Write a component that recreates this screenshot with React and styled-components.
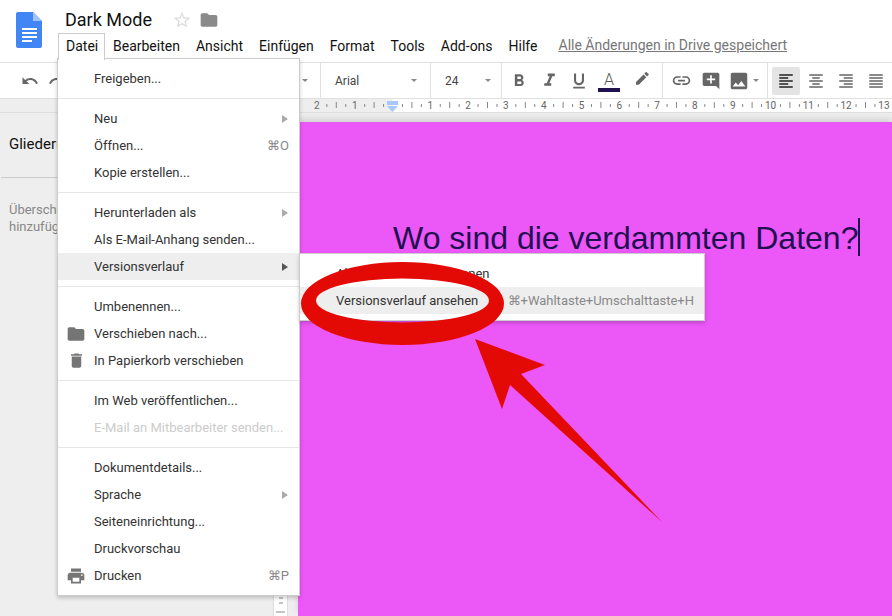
import styled, { createGlobalStyle } from 'styled-components';

const GlobalStyle = createGlobalStyle`
	html, body {
		margin: 0;
		padding: 0;
		overflow: hidden;
		background: #fff;
		font-family: Roboto, "Liberation Sans", sans-serif;
	}
`;

const paths = {
	undo: 'M12.5 8c-2.65 0-5.05.99-6.9 2.6L2 7v9h9l-3.62-3.62c1.39-1.16 3.16-1.88 5.12-1.88 3.54 0 6.55 2.31 7.6 5.5l2.37-.78C21.08 11.03 17.15 8 12.5 8z',
	redo: 'M18.4 10.6C16.55 8.99 14.15 8 11.5 8c-4.65 0-8.58 3.03-9.96 7.22L3.9 16c1.05-3.19 4.05-5.5 7.6-5.5 1.95 0 3.73.72 5.12 1.88L13 16h9V7l-3.6 3.6z',
	bold: 'M15.6 10.79c.97-.67 1.65-1.77 1.65-2.79 0-2.26-1.75-4-4-4H7v14h7.04c2.09 0 3.71-1.7 3.71-3.79 0-1.52-.86-2.82-2.15-3.42zM10 6.5h3c.83 0 1.5.67 1.5 1.5s-.67 1.5-1.5 1.5h-3v-3zm3.5 9H10v-3h3.5c.83 0 1.5.67 1.5 1.5s-.67 1.5-1.5 1.5z',
	italic: 'M10 4v3h2.21l-3.42 8H6v3h8v-3h-2.21l3.42-8H18V4z',
	underline: 'M12 17c3.31 0 6-2.69 6-6V3h-2.5v8c0 1.93-1.57 3.5-3.5 3.5S8.5 12.93 8.5 11V3H6v8c0 3.31 2.69 6 6 6zm-7 2v2h14v-2H5z',
	pen: 'M17.75 7 14 3.25l-10 10V17h3.75l10-10zm2.96-2.96c.39-.39.39-1.02 0-1.41L18.37.29c-.39-.39-1.02-.39-1.41 0L15 2.25 18.75 6l1.96-1.96z',
	link: 'M3.9 12c0-1.71 1.39-3.1 3.1-3.1h4V7H7c-2.76 0-5 2.24-5 5s2.24 5 5 5h4v-1.9H7c-1.71 0-3.1-1.39-3.1-3.1zM8 13h8v-2H8v2zm9-6h-4v1.9h4c1.71 0 3.1 1.39 3.1 3.1s-1.39 3.1-3.1 3.1h-4V17h4c2.76 0 5-2.24 5-5s-2.24-5-5-5z',
	comment: 'M21.99 4c0-1.1-.89-2-1.99-2H4c-1.1 0-2 .9-2 2v12c0 1.1.9 2 2 2h14l4 4-.01-18zM17 11h-4v4h-2v-4H7V9h4V5h2v4h4v2z',
	image: 'M21 19V5c0-1.1-.9-2-2-2H5c-1.1 0-2 .9-2 2v14c0 1.1.9 2 2 2h14c1.1 0 2-.9 2-2zM8.5 13.5l2.5 3.01L14.5 12l4.5 6H5l3.5-4.5z',
	alignLeft: 'M15 15H3v2h12v-2zm0-8H3v2h12V7zM3 13h18v-2H3v2zm0 8h18v-2H3v2zM3 3v2h18V3H3z',
	alignCenter: 'M7 15v2h10v-2H7zm-4 6h18v-2H3v2zm0-8h18v-2H3v2zm4-6v2h10V7H7zM3 3v2h18V3H3z',
	alignRight: 'M3 21h18v-2H3v2zm6-4h12v-2H9v2zm-6-4h18v-2H3v2zm6-4h12V7H9v2zM3 3v2h18V3H3z',
	alignJustify: 'M3 21h18v-2H3v2zm0-4h18v-2H3v2zm0-4h18v-2H3v2zm0-4h18V7H3v2zm0-6v2h18V3H3z',
	folder: 'M10 4H4c-1.1 0-1.99.9-1.99 2L2 18c0 1.1.9 2 2 2h16c1.1 0 2-.9 2-2V8c0-1.1-.9-2-2-2h-8l-2-2z',
	trash: 'M6 19c0 1.1.9 2 2 2h8c1.1 0 2-.9 2-2V7H6v12zM19 4h-3.5l-1-1h-5l-1 1H5v2h14V4z',
	print: 'M19 8H5c-1.66 0-3 1.34-3 3v6h4v4h12v-4h4v-6c0-1.66-1.34-3-3-3zm-3 11H8v-5h8v5zm3-7c-.55 0-1-.45-1-1s.45-1 1-1 1 .45 1 1-.45 1-1 1zm-1-9H6v4h12V3z',
	star: 'M22 9.24l-7.19-.62L12 2 9.19 8.63 2 9.24l5.46 4.73L5.82 21 12 17.27 18.18 21l-1.63-7.03L22 9.24zM12 15.4l-3.76 2.27 1-4.28-3.32-2.88 4.38-.38L12 6.1l1.71 4.04 4.38.38-3.32 2.88 1 4.28L12 15.4z',
};

const Icon = ({ name, size = 18, color = '#666' }) => (
	<svg width={size} height={size} viewBox="0 0 24 24" fill={color} style={{ display: 'block', flex: 'none' }}>
		<path d={paths[name]} />
	</svg>
);

const Page = styled.div`
	position: relative;
	width: 892px;
	height: 616px;
	overflow: hidden;
	display: flex;
	flex-direction: column;
	background: #fff;
`;

const Header = styled.header`
	height: 62px;
	flex: none;
	display: flex;
	border-bottom: 1px solid #e0e0e0;
`;

const Logo = styled.svg`
	flex: none;
	width: 26px;
	height: 36px;
	margin: 12px 16px 0 16px;
`;

const HeaderMain = styled.div`
	display: flex;
	flex-direction: column;
`;

const TitleRow = styled.div`
	height: 33px;
	padding: 8px 0 0 7px;
	box-sizing: border-box;
	display: flex;
	align-items: flex-start;
`;

const DocTitle = styled.div`
	font-size: 18px;
	line-height: 24px;
	color: #111;
	margin-right: 20px;
	width: 87px;
	white-space: nowrap;
`;

const TitleIcon = styled.div`
	margin: 2px ${(props) => props.gap || 0}px 0 0;
`;

const MenuBar = styled.nav`
	display: flex;
	align-items: flex-start;
	font-size: 14px;
	color: #111;
`;

const MenuTab = styled.div`
	position: relative;
	height: 26px;
	line-height: 24px;
	padding: 0 7px;
	box-sizing: border-box;
	border: 1px solid transparent;
	border-bottom: none;
	white-space: nowrap;

	${(props) =>
		props.open &&
		`
		width: 47px;
		height: 27px;
		border-color: #ccc;
		background: #fff;
		z-index: 3;
	`}
`;

const SaveStatus = styled.div`
	margin-left: 13px;
	line-height: 24px;
	color: #777;
	text-decoration: underline;
	white-space: nowrap;
`;

const Toolbar = styled.div`
	height: 35px;
	flex: none;
	display: flex;
	border-bottom: 1px solid #e0e0e0;
`;

const ToolGroup = styled.div`
	width: ${(props) => props.width}px;
	flex: none;
	display: flex;
	align-items: center;
	padding-left: ${(props) => props.pad || 0}px;
	box-sizing: border-box;
	gap: ${(props) => props.gap || 0}px;
	font-size: 13px;
	color: #555;

	& + & {
		border-left: 1px solid #e0e0e0;
	}
`;

const ToolButton = styled.div`
	width: ${(props) => props.width || 30}px;
	height: 28px;
	flex: none;
	display: flex;
	align-items: center;
	justify-content: center;
	background: ${(props) => (props.active ? '#e4e4e4' : 'transparent')};
	border-radius: 2px;
`;

const DropArrow = styled.span`
	flex: none;
	width: 0;
	height: 0;
	margin-left: ${(props) => props.left || 0}px;
	border-left: 3px solid transparent;
	border-right: 3px solid transparent;
	border-top: 3px solid #888;
`;

const ToolLabel = styled.span`
	width: ${(props) => props.width}px;
	flex: none;
	font-size: ${(props) => props.size || 12}px;
	color: #444;
`;

const TextColor = styled.div`
	width: 22px;
	display: flex;
	flex-direction: column;
	align-items: center;
	margin-top: 2px;
`;

const TextColorLetter = styled.span`
	font-size: 16px;
	font-weight: 300;
	line-height: 17px;
	color: #555;
`;

const TextColorBar = styled.span`
	width: 22px;
	height: 4px;
	background: #1f1050;
`;

const RulerBar = styled.div`
	height: 13px;
	flex: none;
	background: #eee;
	border-bottom: 1px solid #ddd;
`;

const RulerText = styled.text`
	font-family: Roboto, "Liberation Sans", sans-serif;
	font-size: 10px;
	fill: #666;
	text-anchor: middle;
`;

const Workspace = styled.main`
	flex: 1;
	min-height: 0;
	display: flex;
	background: #eee;
`;

const Sidebar = styled.aside`
	width: 273px;
	flex: none;
	box-sizing: border-box;
	overflow: hidden;
`;

const SidebarTitle = styled.div`
	height: 65px;
	margin-left: 1px;
	padding: 21px 0 0 8px;
	box-sizing: border-box;
	font-size: 15px;
	line-height: 20px;
	color: #111;
	border-bottom: 1px solid #ccc;
`;

const SidebarHint = styled.p`
	margin: 23px 0 0 9px;
	font-size: 13px;
	line-height: 17px;
	color: #888;
	white-space: nowrap;
`;

const VerticalRuler = styled.div`
	width: 13px;
	flex: none;
	margin-top: 9px;
	background: #fff;
	border-left: 1px solid #ddd;
	border-right: 1px solid #ddd;
	display: flex;
	flex-direction: column;
	justify-content: flex-end;
`;

const DocCanvas = styled.div`
	flex: 1;
	margin: 9px 0 0 10px;
	padding: 96px 0 0 95px;
	background: #ec57f7;
	box-shadow: 0 -3px 6px rgba(0, 0, 0, 0.12);
`;

const DocLine = styled.div`
	display: inline-block;
	padding-top: 2px;
	font-family: "Liberation Sans", Arial, sans-serif;
	font-size: 32px;
	line-height: 36px;
	color: #1f1050;
	border-right: 2px solid #1f1050;
	white-space: nowrap;
`;

const Menu = styled.div`
	position: absolute;
	z-index: 2;
	top: ${(props) => props.top}px;
	left: ${(props) => props.left}px;
	width: ${(props) => props.width}px;
	padding: 6px 0;
	box-sizing: border-box;
	background: #fff;
	border: 1px solid #ccc;
	box-shadow: 0 2px 4px rgba(0, 0, 0, 0.2);
	font-size: 13px;
`;

const MenuRow = styled.div`
	position: relative;
	height: 27px;
	display: flex;
	align-items: center;
	justify-content: space-between;
	padding: 0 10px 0 36px;
	background: ${(props) => (props.active ? '#eee' : 'transparent')};
	color: ${(props) => (props.disabled ? '#ccc' : '#333')};
	white-space: nowrap;
`;

const MenuIcon = styled.span`
	position: absolute;
	left: 0;
	top: 0;
	width: 36px;
	height: 27px;
	display: flex;
	align-items: center;
	justify-content: center;
`;

const Shortcut = styled.span`
	color: #888;
`;

const SubArrow = styled.span`
	width: 0;
	height: 0;
	margin-right: 1px;
	border-top: 4px solid transparent;
	border-bottom: 4px solid transparent;
	border-left: 6px solid ${(props) => (props.dark ? '#555' : '#aaa')};
`;

const Separator = styled.div`
	height: 1px;
	margin: 6px 0;
	background: #e6e6e6;
`;

const Annotation = styled.svg`
	position: absolute;
	z-index: 4;
	top: 0;
	left: 0;
	pointer-events: none;
`;

const menuSections = [
	[{ label: 'Freigeben...' }],
	[
		{ label: 'Neu', sub: true },
		{ label: 'Öffnen...', shortcut: '⌘O' },
		{ label: 'Kopie erstellen...' },
	],
	[
		{ label: 'Herunterladen als', sub: true },
		{ label: 'Als E-Mail-Anhang senden...' },
		{ label: 'Versionsverlauf', sub: true, active: true },
	],
	[
		{ label: 'Umbenennen...' },
		{ label: 'Verschieben nach...', icon: 'folder', iconSize: 20 },
		{ label: 'In Papierkorb verschieben', icon: 'trash', iconSize: 19 },
	],
	[
		{ label: 'Im Web veröffentlichen...' },
		{ label: 'E-Mail an Mitbearbeiter senden...', disabled: true },
	],
	[
		{ label: 'Dokumentdetails...' },
		{ label: 'Sprache', sub: true },
		{ label: 'Seiteneinrichtung...' },
		{ label: 'Druckvorschau' },
		{ label: 'Drucken', icon: 'print', iconSize: 20, shortcut: '⌘P' },
	],
];

const menuTabs = ['Bearbeiten', 'Ansicht', 'Einfügen', 'Format', 'Tools', 'Add-ons', 'Hilfe'];

const RULER_ORIGIN = 392.5;
const RULER_INCH = 37.8;

const Ruler = () => {
	const marks = [];
	for (let q = -8; q < 53; q++) {
		const x = RULER_ORIGIN + (q * RULER_INCH) / 4;
		if (q === 0) continue;
		if (q % 4 === 0) {
			marks.push(
				<RulerText key={q} x={x} y={10}>
					{Math.abs(q / 4)}
				</RulerText>
			);
		} else if (q % 2 === 0) {
			marks.push(<rect key={q} x={x} y={3} width={1} height={6} fill="#888" />);
		} else {
			marks.push(<rect key={q} x={x} y={5} width={1} height={3} fill="#888" />);
		}
	}
	return (
		<RulerBar>
			<svg width="892" height="13" style={{ display: 'block' }}>
				<rect x={RULER_ORIGIN} y="0" width="500" height="13" fill="#fff" />
				{marks}
				<rect x="387" y="2" width="11" height="4" fill="#a8c7fa" />
				<path d="M387 7h11l-5.500 6z" fill="#a8c7fa" />
			</svg>
		</RulerBar>
	);
};

const App = () => {
	return (
		<Page>
			<GlobalStyle />
			<Header>
				<Logo viewBox="0 0 26 36">
					<path d="M2 0h15l9 9v25a2 2 0 0 1-2 2H2a2 2 0 0 1-2-2V2a2 2 0 0 1 2-2z" fill="#4285f4" />
					<path d="M17 0l9 9h-9z" fill="#a1c2fa" />
					<path d="M6 16h15v2H6zM6 20h15v2H6zM6 24h15v2H6zM6 28h10v2H6z" fill="#fff" />
				</Logo>
				<HeaderMain>
					<TitleRow>
						<DocTitle>Dark Mode</DocTitle>
						<TitleIcon gap={7}>
							<Icon name="star" size={20} color="#ddd" />
						</TitleIcon>
						<TitleIcon>
							<Icon name="folder" size={20} color="#8a8a8a" />
						</TitleIcon>
					</TitleRow>
					<MenuBar>
						<MenuTab open>Datei</MenuTab>
						{menuTabs.map((tab) => (
							<MenuTab key={tab}>{tab}</MenuTab>
						))}
						<SaveStatus>Alle Änderungen in Drive gespeichert</SaveStatus>
					</MenuBar>
				</HeaderMain>
			</Header>

			<Toolbar>
				<ToolGroup width={320} pad={15}>
					<ToolButton>
						<Icon name="undo" />
					</ToolButton>
					<ToolButton width={24}>
						<Icon name="redo" />
					</ToolButton>
					<DropArrow left={233} />
				</ToolGroup>
				<ToolGroup width={110} pad={14}>
					<ToolLabel width={76}>Arial</ToolLabel>
					<DropArrow />
				</ToolGroup>
				<ToolGroup width={71} pad={14}>
					<ToolLabel width={40}>24</ToolLabel>
					<DropArrow />
				</ToolGroup>
				<ToolGroup width={161} pad={2}>
					<ToolButton>
						<Icon name="bold" size={20} />
					</ToolButton>
					<ToolButton>
						<Icon name="italic" size={21} />
					</ToolButton>
					<ToolButton>
						<Icon name="underline" size={20} />
					</ToolButton>
					<ToolButton>
						<TextColor>
							<TextColorLetter>A</TextColorLetter>
							<TextColorBar />
						</TextColor>
					</ToolButton>
					<ToolButton width={36}>
						<Icon name="pen" size={18} />
					</ToolButton>
				</ToolGroup>
				<ToolGroup width={105} pad={3}>
					<ToolButton>
						<Icon name="link" size={21} />
					</ToolButton>
					<ToolButton>
						<Icon name="comment" size={20} />
					</ToolButton>
					<ToolButton width={26}>
						<Icon name="image" size={22} />
					</ToolButton>
					<DropArrow left={1} />
				</ToolGroup>
				<ToolGroup width={125} pad={4} gap={2}>
					<ToolButton width={28} active>
						<Icon name="alignLeft" color="#222" />
					</ToolButton>
					<ToolButton width={28}>
						<Icon name="alignCenter" />
					</ToolButton>
					<ToolButton width={28}>
						<Icon name="alignRight" />
					</ToolButton>
					<ToolButton width={28}>
						<Icon name="alignJustify" />
					</ToolButton>
				</ToolGroup>
			</Toolbar>

			<Ruler />

			<Workspace>
				<Sidebar>
					<SidebarTitle>Gliederung</SidebarTitle>
					<SidebarHint>
						Überschriften, die Sie dem Dokument
						<br />
						hinzufügen, werden hier angezeigt.
					</SidebarHint>
				</Sidebar>
				<VerticalRuler>
					<svg width="13" height="24" style={{ display: 'block' }}>
						<path d="M3 3h8M5 6h4" stroke="#888" fill="none" />
						<path d="M5 11h4M2 20h9" stroke="#888" fill="none" />
					</svg>
				</VerticalRuler>
				<DocCanvas>
					<DocLine>Wo sind die verdammten Daten?</DocLine>
				</DocCanvas>
			</Workspace>

			<Menu top={58} left={57} width={243}>
				{menuSections.map((section, index) => (
					<div key={section[0].label}>
						{index > 0 && <Separator />}
						{section.map((item) => (
							<MenuRow key={item.label} active={item.active} disabled={item.disabled}>
								{item.icon && (
									<MenuIcon>
										<Icon name={item.icon} size={item.iconSize} color="#757575" />
									</MenuIcon>
								)}
								<span>{item.label}</span>
								{item.shortcut && <Shortcut>{item.shortcut}</Shortcut>}
								{item.sub && <SubArrow dark={item.active} />}
							</MenuRow>
						))}
					</div>
				))}
			</Menu>

			<Menu top={253} left={299} width={406}>
				<MenuRow>
					<span>Aktuelle Version benennen</span>
				</MenuRow>
				<MenuRow active>
					<span>Versionsverlauf ansehen</span>
					<Shortcut>⌘+Wahltaste+Umschalttaste+H</Shortcut>
				</MenuRow>
			</Menu>

			<Annotation width="892" height="616" viewBox="0 0 892 616">
				<path
					fillRule="evenodd"
					fill="#e30a06"
					d="M301 303.500a101.500 41.500 0 1 0 203 0a101.500 41.500 0 1 0-203 0zM316 300.500a86.500 22 0 1 1 173 0a86.500 22 0 1 1-173 0z"
				/>
				<path fill="#e30a06" d="M475 339L545 365L521 374L662 522L510 385L502 409z" />
			</Annotation>
		</Page>
	);
};

export default App;
